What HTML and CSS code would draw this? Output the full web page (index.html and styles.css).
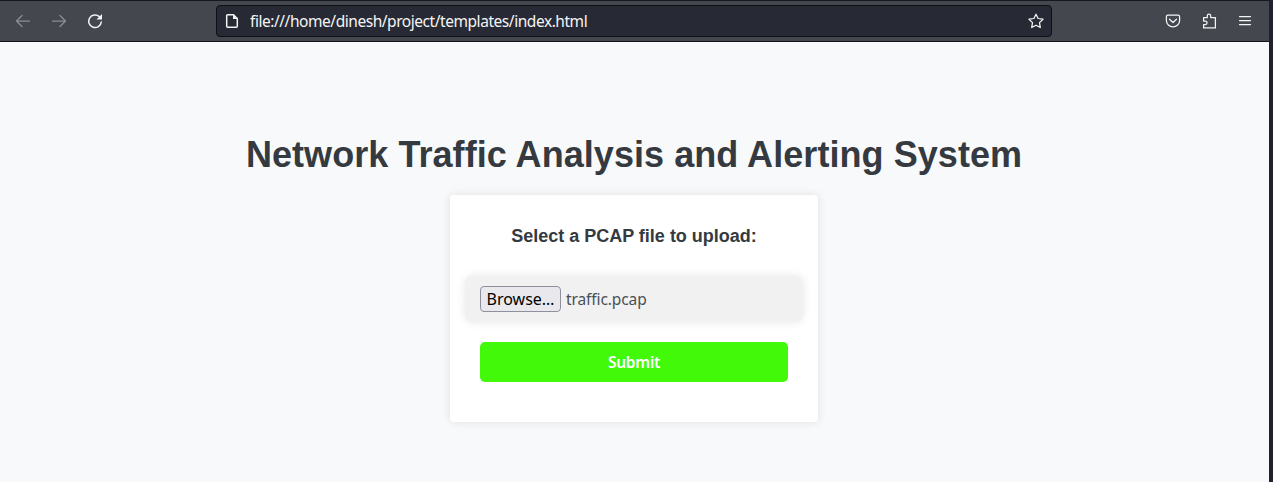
FILE: index.html
```html
<!DOCTYPE html>
<html lang="en">
<head>
<meta charset="utf-8">
<title>Network Traffic Analysis and Alerting System</title>
<link rel="stylesheet" href="styles.css">
</head>
<body>
<div class="window">
  <header class="toolbar">
    <nav class="nav">
      <svg class="dim" width="16" height="16" viewBox="0 0 16 16"><path d="M14.5 8H2M7 2.5 1.5 8 7 13.500"/></svg>
      <svg class="dim" width="16" height="16" viewBox="0 0 16 16"><path d="M1.500 8H14M9 2.500 14.500 8 9 13.500"/></svg>
      <svg class="reload" width="16" height="16" viewBox="0 0 16 16"><path d="M12.300 3.600A6.300 6.300 0 1 0 14.300 9"/><path class="solid" d="M15 1v5.500H9.500z"/></svg>
    </nav>
    <div class="address">
      <svg class="bold" width="16" height="16" viewBox="0 0 16 16"><path d="M3.700 1.700H9.500L13.300 5.500V13.300a1 1 0 0 1-1 1H3.700a1 1 0 0 1-1-1V2.700a1 1 0 0 1 1-1z"/><path class="solid" d="M9 1.500v4.500h4.500z"/></svg>
      <span class="url">file:///home/dinesh/project/templates/index.html</span>
      <svg width="16" height="16" viewBox="0 0 16 16"><path d="M8 1.200 10.100 5.500 15 6.200 11.500 9.600 12.300 14.500 8 12.200 3.700 14.500 4.500 9.600 1 6.200 5.900 5.500z"/></svg>
    </div>
    <div class="tools">
      <svg width="16" height="16" viewBox="0 0 16 16"><path d="M3 2.200h10a1.600 1.600 0 0 1 1.600 1.600V7.500a6.600 6.300 0 0 1-13.200 0V3.800A1.600 1.600 0 0 1 3 2.200z"/><path d="M4.500 6.200 8 9.500l3.500-3.300"/></svg>
      <svg width="16" height="16" viewBox="0 0 16 16"><path d="M2.600 4.600H6.300V2.800a1.700 1.700 0 0 1 3.400 0v1.800h4.700v10.300H2.600v-3.400h1.700a1.700 1.700 0 0 0 0-3.500H2.600z"/></svg>
      <svg width="16" height="16" viewBox="0 0 16 16"><path d="M2.500 3.500h11M2.500 7.500h11M2.500 11.500h11"/></svg>
    </div>
  </header>
  <main class="page">
    <h1 class="title">Network Traffic Analysis and Alerting System</h1>
    <form class="card">
      <label class="label">Select a PCAP file to upload:</label>
      <div class="file">
        <button class="browse" type="button">Browse…</button>
        <span class="filename">traffic.pcap</span>
      </div>
      <button class="submit" type="button">Submit</button>
    </form>
  </main>
</div>
</body>
</html>
```
FILE: styles.css
```css
* { box-sizing: border-box; }
body {
  margin: 0;
  height: 482px;
  overflow: hidden;
  padding-right: 4px;
  background: #1f212e;
  font-family: "Noto Sans", sans-serif;
}
.window { height: 482px; background: #f8f9fb; }
.toolbar {
  display: flex;
  align-items: center;
  height: 42px;
  padding: 1px 16px 1px 15px;
  background: #44474e;
  border-top: 1px solid #17181f;
  border-bottom: 1px solid #111319;
}
svg { display: block; flex: none; fill: none; stroke: #f4f4f5; stroke-width: 1.25; stroke-linejoin: round; stroke-linecap: round; }
svg .solid { fill: #f4f4f5; stroke: none; }
svg.dim { stroke: #8b8d91; }
svg.reload, svg.bold { stroke-width: 1.5; }
.nav { display: flex; gap: 20px; width: 201px; }
.address {
  display: flex;
  align-items: center;
  width: 836px;
  height: 32px;
  padding: 0 7px;
  background: #272934;
  border: 1px solid #0e1016;
  border-radius: 4px;
}
.url {
  flex: 1;
  margin-left: 10px;
  font-size: 15.5px;
  letter-spacing: -.45px;
  line-height: 30px;
  color: #f5f5f6;
  white-space: nowrap;
}
.tools { display: flex; gap: 20px; margin-left: auto; }
.page { display: flex; flex-direction: column; align-items: center; padding-top: 92px; }
.title {
  margin: 0 1px 20px 0;
  font: bold 36px/41px "Liberation Sans", Arial, sans-serif;
  letter-spacing: .06px;
  color: #343a40;
  white-space: nowrap;
}
.card {
  width: 368px;
  height: 227px;
  padding: 30px;
  margin-right: 1px;
  background: #fff;
  border-radius: 4px;
  box-shadow: 0 0 10px rgba(0, 0, 0, .1);
}
.label {
  display: block;
  text-align: center;
  font: bold 18px/22px "Liberation Sans", Arial, sans-serif;
  color: #343a40;
}
.file {
  display: flex;
  align-items: center;
  height: 46px;
  margin: 29px -15px 20px;
  padding: 0 15px;
  background: #f1f1f1;
  border-radius: 8px;
  box-shadow: 0 0 10px rgba(0, 0, 0, .1);
}
.browse {
  width: 81px;
  height: 26px;
  padding: 0;
  background: #e9e9ed;
  border: 1px solid #8f8f9d;
  border-radius: 4px;
  font: 16px/24px "Noto Sans", sans-serif;
  color: #000;
}
.filename { margin-left: 5px; font-size: 15.5px; letter-spacing: -.1px; line-height: 24px; color: #495057; }
.submit {
  display: block;
  width: 100%;
  height: 40px;
  padding: 0;
  border: 0;
  border-radius: 5px;
  background: #42f90a;
  color: #fff;
  font: 600 15.5px/40px "Noto Sans", sans-serif;
  letter-spacing: -.25px;
}
```
